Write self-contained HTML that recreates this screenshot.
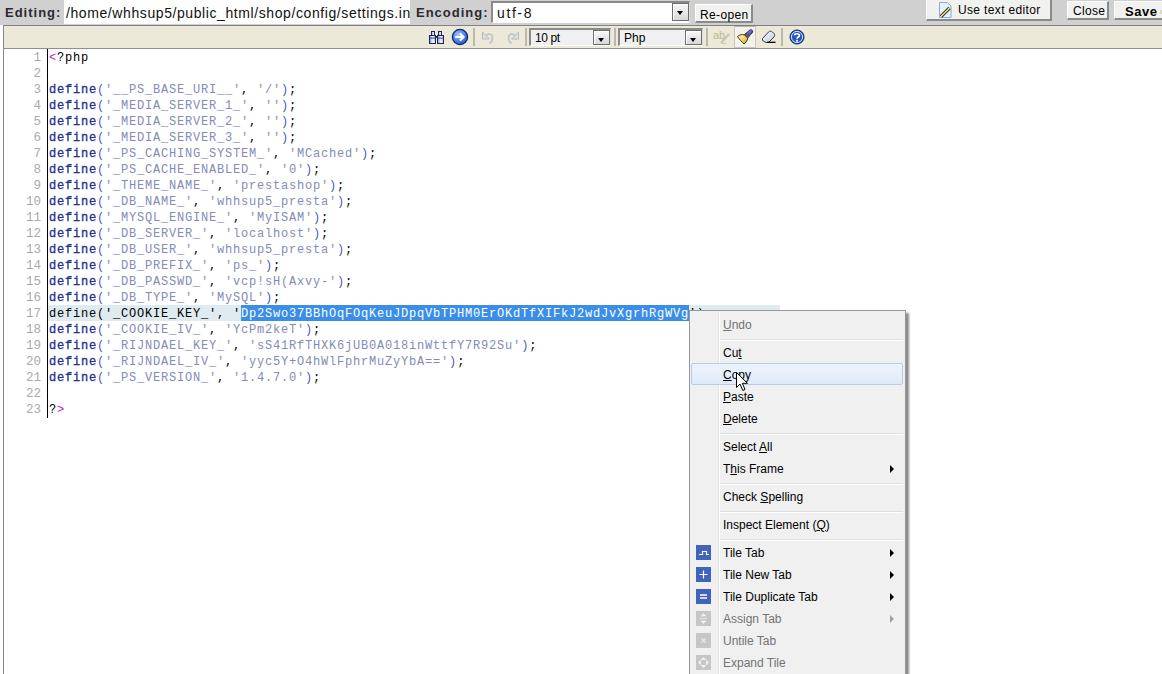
<!DOCTYPE html>
<html><head><meta charset="utf-8">
<style>
*{margin:0;padding:0;box-sizing:border-box}
html,body{width:1162px;height:674px;overflow:hidden;background:#fff;font-family:"Liberation Sans",sans-serif;position:relative}
.a{position:absolute}
#hdr{left:0;top:0;width:1162px;height:25px;background:#d0d0d0}
.lbl{font-weight:bold;font-size:13px;letter-spacing:1px;color:#2a2a30;top:6px;line-height:14px}
#path{left:64px;top:0;width:346px;height:24px;background:#fff;overflow:hidden;white-space:nowrap;font-size:14px;letter-spacing:0.59px;color:#111;padding-left:2px;line-height:24px;padding-top:1px}
.btn{background:#f1f1ef;border:1px solid #fff;border-right:2px solid #8a8a8a;border-bottom:2px solid #8a8a8a;font-size:12px;color:#000;white-space:nowrap}
#tb{left:3px;top:25px;width:1159px;height:24px;background:#ece9d8;border-top:1px solid #7f7f7f;border-bottom:1px solid #8f8f8f;border-left:1px solid #8a8a8a}
.sep{width:2px;height:18px;top:28px;background:#bab8aa}
.sel{background:#f0f0f0;border-top:2px solid #8a8a88;border-left:2px solid #8a8a88;border-right:1px solid #ddd;border-bottom:1px solid #fff;font-size:12px;color:#000}
.dd{background:linear-gradient(#f8f8f8,#d8d8d8);border:1px solid #6e6e6e;box-shadow:inset 1px 1px 0 #fff}
.dd:after{content:"";position:absolute;left:4px;top:7px;border-left:3.5px solid transparent;border-right:3.5px solid transparent;border-top:4px solid #000}
#ed{left:3px;top:49px;width:1159px;height:625px;border-left:1px solid #8a8a8a}
.ln{left:4px;width:37px;text-align:right;font-family:"Liberation Mono",monospace;font-size:12.5px;padding-top:2px;color:#aaa;line-height:16px;height:16px}
.cd{left:49px;font-family:"Liberation Mono",monospace;font-size:12px;letter-spacing:0.8px;line-height:16px;height:16px;white-space:pre;color:#000}
.k{color:#1c2e90;-webkit-text-stroke:0.3px #1c2e90}
.p{color:#4a5ac8}
.s{color:#858ab8}
.t{color:#c020c0}
#menu{left:689px;top:310px;width:217px;height:400px;background:#f0f0f0;border:1px solid #979797;box-shadow:3px 3px 2px rgba(0,0,0,0.45)}
.mi{left:34px;font-size:12px;color:#000;line-height:14px;white-space:nowrap}
.dis{color:#737373}
.ms{left:31px;width:183px;height:2px;border-top:1px solid #e0e0e0;border-bottom:1px solid #fff}
.arr{left:200px;width:0;height:0;border-top:4px solid transparent;border-bottom:4px solid transparent;border-left:4px solid #000}
.ic{left:7px;width:14px;height:14px;background:#3e68c0}
.ic.g{background:#c8c8c8}
u{text-decoration:underline;text-underline-offset:1px}
</style></head><body>
<div id="hdr" class="a"></div>
<div class="a lbl" style="left:5px">Editing:</div>
<div id="path" class="a">/home/whhsup5/public_html/shop/config/settings.in</div>
<div class="a lbl" style="left:416px">Encoding:</div>
<div class="a" style="left:491px;top:1px;width:199px;height:22px;background:#fff;border-top:2px solid #8a8a8a;border-left:2px solid #8a8a8a;border-right:1px solid #ddd;border-bottom:1px solid #fff"></div>
<div class="a" style="left:497px;top:6px;font-size:14px;letter-spacing:1.6px;color:#111;line-height:15px">utf-8</div>
<div class="a dd" style="left:672px;top:3px;width:17px;height:18px"></div>
<div class="a btn" style="left:695px;top:4px;width:58px;height:19px;padding:3px 0 0 4px;letter-spacing:0.35px">Re-open</div>
<div class="a btn" style="left:926px;top:-1px;width:126px;height:22px;padding:3px 0 0 31px;letter-spacing:0.35px">Use text editor</div>
<div class="a btn" style="left:1067px;top:1px;width:42px;height:19px;padding:2px 0 0 5px;letter-spacing:0.3px">Close</div>
<div class="a btn" style="left:1114px;top:1px;width:60px;height:19px;padding:2px 0 0 10px;font-weight:bold;font-size:13px;letter-spacing:0.5px">Save</div>

<div class="a" style="left:1160px;top:10px;width:2px;height:4px;background:#e6d8a8"></div>
<div id="tb" class="a"></div>
<div class="a sep" style="left:473px"></div>
<div class="a sep" style="left:525px"></div>
<div class="a sep" style="left:614px"></div>
<div class="a sep" style="left:706px"></div>
<div class="a sep" style="left:781px"></div>
<div class="a sel" style="left:529px;top:28px;width:82px;height:18px"></div>
<div class="a" style="left:535px;top:31px;font-size:12px;line-height:14px;letter-spacing:-0.4px">10 pt</div>
<div class="a dd" style="left:593px;top:30px;width:17px;height:15px"></div>
<div class="a sel" style="left:618px;top:28px;width:85px;height:18px"></div>
<div class="a" style="left:624px;top:31px;font-size:12px;line-height:14px">Php</div>
<div class="a dd" style="left:685px;top:30px;width:17px;height:15px"></div>

<!--icons-->
<svg class="a" style="left:428px;top:30px" width="17" height="15" viewBox="0 0 17 15">
<defs><linearGradient id="bg1" x1="0" y1="0" x2="1" y2="0"><stop offset="0" stop-color="#7f93cc"/><stop offset="0.55" stop-color="#f4f6ff"/><stop offset="1" stop-color="#aebde8"/></linearGradient></defs>
<rect x="3.5" y="1.5" width="3" height="4" fill="url(#bg1)" stroke="#1c2858"/>
<rect x="10.5" y="1.5" width="3" height="4" fill="url(#bg1)" stroke="#1c2858"/>
<rect x="1.5" y="5.5" width="6" height="8" fill="url(#bg1)" stroke="#1c2858"/>
<rect x="9.5" y="5.5" width="6" height="8" fill="url(#bg1)" stroke="#1c2858"/>
<rect x="7" y="6" width="3" height="2" fill="#1c2858"/>
<rect x="2" y="7.6" width="5" height="1" fill="#3a4a88"/><rect x="10" y="7.6" width="5" height="1" fill="#3a4a88"/>
</svg>
<svg class="a" style="left:451px;top:28px" width="18" height="18" viewBox="0 0 18 18">
<defs><radialGradient id="rg1" cx="0.4" cy="0.35" r="0.7"><stop offset="0" stop-color="#a8c8ff"/><stop offset="0.6" stop-color="#4a7ef0"/><stop offset="1" stop-color="#2850c8"/></radialGradient></defs>
<circle cx="9" cy="9" r="7.6" fill="url(#rg1)" stroke="#10286a" stroke-width="1.3"/>
<path d="M4.2 9 H12.5 M9 5.4 L12.6 9 L9 12.6" stroke="#fff" stroke-width="2.1" fill="none"/>
</svg>
<svg class="a" style="left:481px;top:30px" width="14" height="15" viewBox="0 0 14 15">
<path d="M5 5.5 C8 3,11.5 4,11.5 8 C11.5 10.5,10.5 12,8.5 13.5" stroke="#c4c8cc" stroke-width="2" fill="none"/>
<path d="M1.5 2 L1.5 9 L8.5 9 Z" fill="#dae0e6" stroke="#b8bcc0" stroke-width="1" stroke-linejoin="round"/>
</svg>
<svg class="a" style="left:506px;top:30px" width="14" height="15" viewBox="0 0 14 15">
<path d="M9 5.5 C6 3,2.5 4,2.5 8 C2.5 10.5,3.5 12,5.5 13.5" stroke="#c4c8cc" stroke-width="2" fill="none"/>
<path d="M12.5 2 L12.5 9 L5.5 9 Z" fill="#dae0e6" stroke="#b8bcc0" stroke-width="1" stroke-linejoin="round"/>
</svg>
<div class="a" style="left:713px;top:29px;font-size:11px;color:#b9b98c;line-height:12px">ab</div>
<svg class="a" style="left:719px;top:31px" width="13" height="14" viewBox="0 0 13 14">
<path d="M2 12 L10 3" stroke="#c4c4b4" stroke-width="2.2"/><path d="M3 12.5 H7" stroke="#c8c8bc" stroke-width="1"/>
</svg>
<div class="a" style="left:734px;top:26px;width:22px;height:22px;background:#f3f2ec;border:1px solid #c9c7bb;border-top-color:#b8b6aa"></div>
<svg class="a" style="left:735px;top:28px" width="20" height="18" viewBox="0 0 20 18">
<defs><linearGradient id="yb" x1="0" y1="0" x2="1" y2="1"><stop offset="0" stop-color="#fffbc0"/><stop offset="0.6" stop-color="#e8d060"/><stop offset="1" stop-color="#a08820"/></linearGradient>
<linearGradient id="ph" x1="0" y1="0" x2="1" y2="1"><stop offset="0" stop-color="#9890e0"/><stop offset="1" stop-color="#40388a"/></linearGradient></defs>
<path d="M11.5 7.5 L15.8 3.6" stroke="#2c2860" stroke-width="4.6" stroke-linecap="round"/>
<path d="M11.5 7.5 L15.8 3.6" stroke="url(#ph)" stroke-width="3" stroke-linecap="round"/>
<path d="M9.2 6.8 L11 5.2 L14.2 8.6 L12.6 10.2 Z" fill="#6a6a6a" stroke="#303030" stroke-width="0.7"/>
<path d="M2.5 8.5 C4 7,7 6,9.4 6.9 L12.8 10.2 C12.5 12.5,10.5 15,9 16 C7 14,4 11,2.5 8.5 Z" fill="url(#yb)" stroke="#3c3418" stroke-width="1"/>
</svg>
<svg class="a" style="left:760px;top:30px" width="17" height="14" viewBox="0 0 17 14">
<defs><linearGradient id="eg" x1="0" y1="0" x2="1" y2="1"><stop offset="0" stop-color="#ffffff"/><stop offset="1" stop-color="#b8c4e0"/></linearGradient></defs>
<path d="M2.5 8.5 L8.5 2 C9.5 1,11 0.8,12.5 2 L14 3.5 C15 4.7,14.8 6,14 7 L8.5 12.5 H6 L2.5 10.5 Z" fill="url(#eg)" stroke="#3c4050" stroke-width="1"/>
<path d="M7 12.3 H15.5" stroke="#000" stroke-width="1.3"/>
</svg>
<svg class="a" style="left:789px;top:29px" width="16" height="16" viewBox="0 0 16 16">
<circle cx="8" cy="8" r="7" fill="#1c4cb8" stroke="#0e2a70" stroke-width="1"/>
<circle cx="8" cy="8" r="5.6" fill="#2456c4" stroke="#d8e4ff" stroke-width="1"/>
<path d="M5.6 6.2 C5.6 4.3,10.4 4.1,10.4 6.4 C10.4 8,8 8,8 9.8" stroke="#fff" stroke-width="1.7" fill="none"/>
<rect x="7.1" y="10.8" width="1.8" height="1.8" fill="#fff"/>
</svg>
<svg class="a" style="left:938px;top:1px" width="15" height="18" viewBox="0 0 15 18">
<path d="M1.5 1.5 H9.5 L13 5 V16.5 H1.5 Z" fill="#e6f0ff" stroke="#8aa8d8" stroke-width="1"/>
<path d="M3 15.5 L11.5 7" stroke="#2c2c10" stroke-width="3.4"/>
<path d="M3 15.5 L11.5 7" stroke="#e8e490" stroke-width="1.6"/>
</svg>
<!--endicons-->
<div id="ed" class="a"></div>
<div class="a" style="left:47px;top:49px;width:1px;height:369px;background:#000"></div>
<div class="a" style="left:48px;top:305px;width:732px;height:16px;background:#dfeaf1"></div>
<div class="a" style="left:241px;top:305px;width:448px;height:16px;background:#3a8ee8"></div>

<div id="code">
<div class="a ln" style="top:48px">1</div>
<div class="a cd" style="top:50px"><span class="t">&lt;</span>?php</div>
<div class="a ln" style="top:64px">2</div>
<div class="a ln" style="top:80px">3</div>
<div class="a cd" style="top:82px"><span class="k">define</span><span class="p">(</span><span class="s">'__PS_BASE_URI__'</span>, <span class="s">'/'</span><span class="p">)</span>;</div>
<div class="a ln" style="top:96px">4</div>
<div class="a cd" style="top:98px"><span class="k">define</span><span class="p">(</span><span class="s">'_MEDIA_SERVER_1_'</span>, <span class="s">''</span><span class="p">)</span>;</div>
<div class="a ln" style="top:112px">5</div>
<div class="a cd" style="top:114px"><span class="k">define</span><span class="p">(</span><span class="s">'_MEDIA_SERVER_2_'</span>, <span class="s">''</span><span class="p">)</span>;</div>
<div class="a ln" style="top:128px">6</div>
<div class="a cd" style="top:130px"><span class="k">define</span><span class="p">(</span><span class="s">'_MEDIA_SERVER_3_'</span>, <span class="s">''</span><span class="p">)</span>;</div>
<div class="a ln" style="top:144px">7</div>
<div class="a cd" style="top:146px"><span class="k">define</span><span class="p">(</span><span class="s">'_PS_CACHING_SYSTEM_'</span>, <span class="s">'MCached'</span><span class="p">)</span>;</div>
<div class="a ln" style="top:160px">8</div>
<div class="a cd" style="top:162px"><span class="k">define</span><span class="p">(</span><span class="s">'_PS_CACHE_ENABLED_'</span>, <span class="s">'0'</span><span class="p">)</span>;</div>
<div class="a ln" style="top:176px">9</div>
<div class="a cd" style="top:178px"><span class="k">define</span><span class="p">(</span><span class="s">'_THEME_NAME_'</span>, <span class="s">'prestashop'</span><span class="p">)</span>;</div>
<div class="a ln" style="top:192px">10</div>
<div class="a cd" style="top:194px"><span class="k">define</span><span class="p">(</span><span class="s">'_DB_NAME_'</span>, <span class="s">'whhsup5_presta'</span><span class="p">)</span>;</div>
<div class="a ln" style="top:208px">11</div>
<div class="a cd" style="top:210px"><span class="k">define</span><span class="p">(</span><span class="s">'_MYSQL_ENGINE_'</span>, <span class="s">'MyISAM'</span><span class="p">)</span>;</div>
<div class="a ln" style="top:224px">12</div>
<div class="a cd" style="top:226px"><span class="k">define</span><span class="p">(</span><span class="s">'_DB_SERVER_'</span>, <span class="s">'localhost'</span><span class="p">)</span>;</div>
<div class="a ln" style="top:240px">13</div>
<div class="a cd" style="top:242px"><span class="k">define</span><span class="p">(</span><span class="s">'_DB_USER_'</span>, <span class="s">'whhsup5_presta'</span><span class="p">)</span>;</div>
<div class="a ln" style="top:256px">14</div>
<div class="a cd" style="top:258px"><span class="k">define</span><span class="p">(</span><span class="s">'_DB_PREFIX_'</span>, <span class="s">'ps_'</span><span class="p">)</span>;</div>
<div class="a ln" style="top:272px">15</div>
<div class="a cd" style="top:274px"><span class="k">define</span><span class="p">(</span><span class="s">'_DB_PASSWD_'</span>, <span class="s">'vcp!sH(Axvy-'</span><span class="p">)</span>;</div>
<div class="a ln" style="top:288px">16</div>
<div class="a cd" style="top:290px"><span class="k">define</span><span class="p">(</span><span class="s">'_DB_TYPE_'</span>, <span class="s">'MySQL'</span><span class="p">)</span>;</div>
<div class="a ln" style="top:304px">17</div>
<div class="a cd" style="top:306px">define('_COOKIE_KEY_', '<span style="color:#fff">Dp2Swo37BBhOqFOqKeuJDpqVbTPHM0ErOKdTfXIFkJ2wdJvXgrhRgWVg</span>');</div>
<div class="a ln" style="top:320px">18</div>
<div class="a cd" style="top:322px"><span class="k">define</span><span class="p">(</span><span class="s">'_COOKIE_IV_'</span>, <span class="s">'YcPm2keT'</span><span class="p">)</span>;</div>
<div class="a ln" style="top:336px">19</div>
<div class="a cd" style="top:338px"><span class="k">define</span><span class="p">(</span><span class="s">'_RIJNDAEL_KEY_'</span>, <span class="s">'sS41RfTHXK6jUB0A018inWttfY7R92Su'</span><span class="p">)</span>;</div>
<div class="a ln" style="top:352px">20</div>
<div class="a cd" style="top:354px"><span class="k">define</span><span class="p">(</span><span class="s">'_RIJNDAEL_IV_'</span>, <span class="s">'yyc5Y+O4hWlFphrMuZyYbA=='</span><span class="p">)</span>;</div>
<div class="a ln" style="top:368px">21</div>
<div class="a cd" style="top:370px"><span class="k">define</span><span class="p">(</span><span class="s">'_PS_VERSION_'</span>, <span class="s">'1.4.7.0'</span><span class="p">)</span>;</div>
<div class="a ln" style="top:384px">22</div>
<div class="a ln" style="top:400px">23</div>
<div class="a cd" style="top:402px">?<span class="t">&gt;</span></div>
</div><!--endcode-->

<div id="menu" class="a"></div>
<div class="a" style="left:718px;top:311px;width:2px;height:363px;border-left:1px solid #e2e3e3;border-right:1px solid #fff"></div>
<div class="a" style="left:691px;top:363px;width:212px;height:22px;border:1px solid #b6cce8;border-radius:2px;background:linear-gradient(#eef4fc,#dfeaf8)"></div>
<div class="a mi dis" style="left:723px;top:318px"><u>U</u>ndo</div>
<div class="a ms" style="left:720px;top:339px"></div>
<div class="a mi" style="left:723px;top:346px">Cu<u>t</u></div>
<div class="a mi" style="left:723px;top:368px"><u>C</u>opy</div>
<div class="a mi" style="left:723px;top:390px"><u>P</u>aste</div>
<div class="a mi" style="left:723px;top:412px"><u>D</u>elete</div>
<div class="a ms" style="left:720px;top:433px"></div>
<div class="a mi" style="left:723px;top:440px">Select <u>A</u>ll</div>
<div class="a mi" style="left:723px;top:462px">T<u>h</u>is Frame</div>
<div class="a arr" style="left:890px;top:465px;border-left-color:#000"></div>
<div class="a ms" style="left:720px;top:483px"></div>
<div class="a mi" style="left:723px;top:490px">Check <u>S</u>pelling</div>
<div class="a ms" style="left:720px;top:511px"></div>
<div class="a mi" style="left:723px;top:518px">Inspect Element (<u>Q</u>)</div>
<div class="a ms" style="left:720px;top:539px"></div>
<div class="a mi" style="left:723px;top:546px">Tile Tab</div>
<div class="a arr" style="left:890px;top:549px;border-left-color:#000"></div>
<svg class="a" style="left:696px;top:545px" width="15" height="15"><rect width="15" height="15" fill="#4064bc"/><path d="M3 9.5 H6.5 V6.5 H10.5 V9.5 H13" stroke="#fff" stroke-width="1.2" fill="none"/></svg>
<div class="a mi" style="left:723px;top:568px">Tile New Tab</div>
<div class="a arr" style="left:890px;top:571px;border-left-color:#000"></div>
<svg class="a" style="left:696px;top:567px" width="15" height="15"><rect width="15" height="15" fill="#4064bc"/><path d="M7.5 3.5 V11.5 M3.5 7.5 H11.5" stroke="#fff" stroke-width="1.2"/></svg>
<div class="a mi" style="left:723px;top:590px">Tile Duplicate Tab</div>
<div class="a arr" style="left:890px;top:593px;border-left-color:#000"></div>
<svg class="a" style="left:696px;top:589px" width="15" height="15"><rect width="15" height="15" fill="#4064bc"/><path d="M4 6 H11 M4 9 H11" stroke="#fff" stroke-width="1.3"/></svg>
<div class="a mi dis" style="left:723px;top:612px">Assign Tab</div>
<div class="a arr" style="left:890px;top:615px;border-left-color:#a0a0a0"></div>
<svg class="a" style="left:696px;top:611px" width="15" height="15"><rect width="15" height="15" fill="#c6c6c6"/><path d="M7.5 2.5 L5 5 H10 Z M7.5 12.5 L5 10 H10 Z M4 7.5 H11" fill="#eee" stroke="#eee" stroke-width="0.8"/></svg>
<div class="a mi dis" style="left:723px;top:634px">Untile Tab</div>
<svg class="a" style="left:696px;top:633px" width="15" height="15"><rect width="15" height="15" fill="#c6c6c6"/><path d="M5.5 5.5 L9.5 9.5 M9.5 5.5 L5.5 9.5" stroke="#e8e8e8" stroke-width="1.2"/></svg>
<div class="a mi dis" style="left:723px;top:656px">Expand Tile</div>
<svg class="a" style="left:696px;top:655px" width="15" height="15"><rect width="15" height="15" fill="#c6c6c6"/><path d="M2 7.5 L5 4.5 V10.5 Z M13 7.5 L10 4.5 V10.5 Z M7.5 2 L4.5 5 H10.5 Z M7.5 13 L4.5 10 H10.5 Z" fill="#f0f0f0"/></svg>
<svg class="a" style="left:736px;top:372px" width="13" height="20" viewBox="0 0 13 20"><path d="M0.5 0.5 L0.5 15.5 L4 12 L6.8 18.5 L9 17.5 L6.3 11.3 L11.5 11.3 Z" fill="#fff" stroke="#000" stroke-width="1" stroke-linejoin="miter"/></svg>
<!--endmenu-->
</body></html>
